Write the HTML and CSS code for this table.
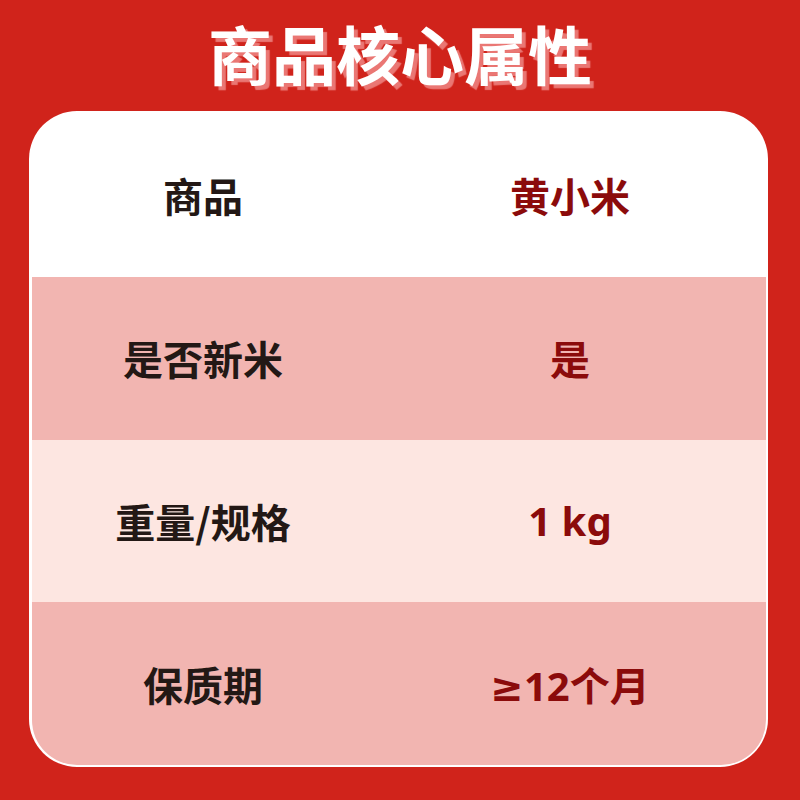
FILE: index.html
```html
<!DOCTYPE html>
<html lang="zh">
<head>
<meta charset="utf-8">
<link rel="stylesheet" href="styles.css">
</head>
<body>
<div class="page">
  <header class="header"><h1 class="title">商品核心属性</h1></header>
  <section class="card">
    <div class="table">
      <div class="row row-white"><div class="label">商品</div><div class="value">黄小米</div></div>
      <div class="row row-pink"><div class="label">是否新米</div><div class="value">是</div></div>
      <div class="row row-light"><div class="label">重量/规格</div><div class="value">1 kg</div></div>
      <div class="row row-pink"><div class="label">保质期</div><div class="value">≥12个月</div></div>
    </div>
  </section>
</div>
</body>
</html>
```
FILE: styles.css
```css
html, body {
  margin: 0;
  padding: 0;
}
body {
  background: #d0231b;
  font-family: "Noto Sans CJK SC", "Noto Sans", sans-serif;
}
.page {
  width: 800px;
  height: 800px;
  display: flex;
  flex-direction: column;
}
.header {
  height: 111px;
  box-sizing: border-box;
  padding-bottom: 8px;
  display: flex;
  align-items: center;
  justify-content: center;
}
.title {
  margin: 0;
  color: #ffffff;
  font-size: 64px;
  font-weight: 700;
  line-height: 1;
  text-shadow: 4px 4px 1px rgba(255, 190, 190, 0.55);
}
.card {
  margin: 0 32px 0 29px;
  height: 656px;
  box-sizing: border-box;
  background: #ffffff;
  border-radius: 48px;
  padding: 3px 2px 2px 3px;
}
.table {
  height: 100%;
  border-radius: 45px;
  overflow: hidden;
  display: flex;
  flex-direction: column;
}
.row {
  flex: 1;
  display: grid;
  grid-template-columns: 342px 1fr;
  align-items: center;
  font-size: 40px;
  font-weight: 700;
}
.row-white { background: #ffffff; }
.row-pink { background: #f2b5b1; }
.row-light { background: #fde6e1; }
.label {
  text-align: center;
  color: #231815;
}
.value {
  text-align: center;
  color: #8b0b0b;
  font-family: "Noto Sans", "DejaVu Sans", "Noto Sans CJK SC", sans-serif;
}
```
